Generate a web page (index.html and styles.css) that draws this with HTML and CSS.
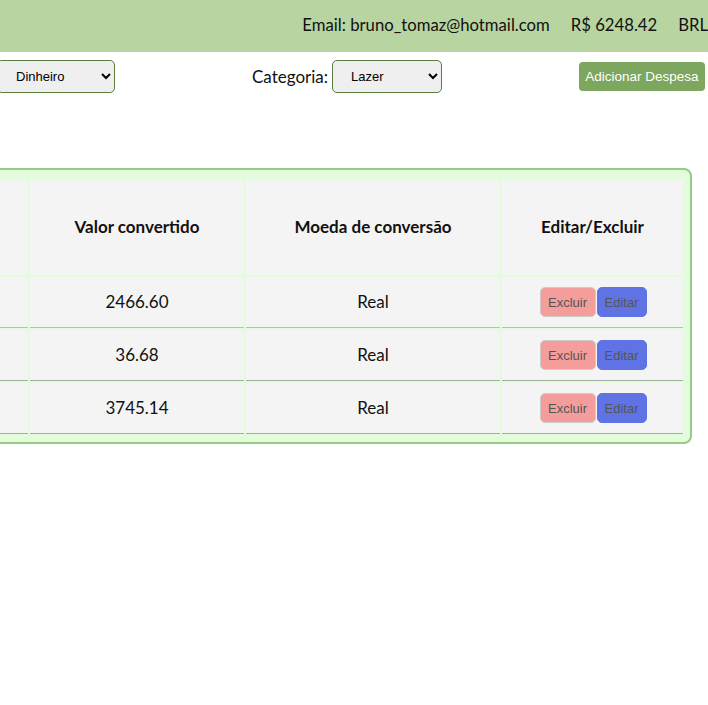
FILE: index.html
```html
<!DOCTYPE html>
<html lang="pt-BR">
<head>
<meta charset="utf-8">
<title>Despesas</title>
<link rel="stylesheet" href="styles.css">
</head>
<body>
<header class="topbar">
  <span class="topbar-item">Email: bruno_tomaz@hotmail.com</span>
  <span class="topbar-item">R$ 6248.42</span>
  <span class="topbar-item">BRL</span>
</header>

<form class="controls">
  <select class="field-select select-method">
    <option>Dinheiro</option>
  </select>
  <label class="field-group">
    <span class="field-label">Categoria:</span>
    <select class="field-select select-cat">
      <option>Lazer</option>
    </select>
  </label>
  <button type="button" class="add-btn">Adicionar Despesa</button>
</form>

<div class="table-box">
  <table class="expense-table">
    <colgroup>
      <col class="col-a">
      <col class="col-b">
      <col class="col-c">
      <col class="col-d">
    </colgroup>
    <thead>
      <tr>
        <th></th>
        <th>Valor convertido</th>
        <th>Moeda de conversão</th>
        <th>Editar/Excluir</th>
      </tr>
    </thead>
    <tbody>
      <tr class="row-first">
        <td></td>
        <td>2466.60</td>
        <td>Real</td>
        <td><button type="button" class="btn-del">Excluir</button><button type="button" class="btn-edit">Editar</button></td>
      </tr>
      <tr>
        <td></td>
        <td>36.68</td>
        <td>Real</td>
        <td><button type="button" class="btn-del">Excluir</button><button type="button" class="btn-edit">Editar</button></td>
      </tr>
      <tr>
        <td></td>
        <td>3745.14</td>
        <td>Real</td>
        <td><button type="button" class="btn-del">Excluir</button><button type="button" class="btn-edit">Editar</button></td>
      </tr>
    </tbody>
  </table>
</div>
</body>
</html>
```

FILE: styles.css
```css
html, body {
  margin: 0;
  padding: 0;
  background: #ffffff;
  overflow: hidden;
}

body {
  font-family: Lato, "Noto Sans", sans-serif;
  font-size: 17px;
  color: #111111;
  width: 708px;
}

.topbar {
  height: 52px;
  background: #b8d4a0;
  display: flex;
  justify-content: flex-end;
  align-items: center;
  gap: 21px;
  white-space: nowrap;
  font-size: 16.7px;
  padding-bottom: 2px;
  box-sizing: border-box;
}

.controls {
  display: flex;
  justify-content: space-between;
  align-items: center;
  margin: 8px 0 0 -3px;
  padding-right: 3px;
  height: 33px;
}

.field-group {
  display: flex;
  align-items: center;
  gap: 4px;
}

.field-select {
  height: 33px;
  border: 1px solid #5a7d3b;
  border-radius: 5px;
  background: #efefef;
  font-family: "Liberation Sans", Arial, sans-serif;
  font-size: 13px;
  color: #000;
  text-align: left;
  padding: 0 4px 0 14px;
}

.select-method { width: 118px; }
.select-cat { width: 110px; }

.add-btn {
  height: 29px;
  width: 126px;
  border: none;
  border-radius: 4px;
  background: #7da65e;
  color: #ffffff;
  font-family: "Liberation Sans", Arial, sans-serif;
  font-size: 13.5px;
  padding: 0;
}

.table-box {
  margin: 75px 16px 0 -181px;
  border: 2px solid #96ca86;
  border-radius: 8px;
  background: #e2fcdc;
  padding: 7px 5px 6px;
}

.expense-table {
  width: 100%;
  table-layout: fixed;
  border-collapse: separate;
  border-spacing: 2px;
}

.col-a { width: 200px; }
.col-b { width: 214px; }
.col-c { width: 254px; }
.col-d { width: 181px; }

.expense-table th {
  background: #f4f4f4;
  height: 96px;
  padding: 0 8px 2px;
  font-weight: 700;
  text-align: center;
  box-sizing: border-box;
}

.expense-table td {
  background: #f4f4f4;
  text-align: center;
  padding: 0 8px 2px;
  height: 51px;
  box-sizing: border-box;
  border-bottom: 1px solid #aaaaaa;
}

.expense-table .row-first td {
  border-bottom-color: #a3cf98;
}

.expense-table td:last-child {
  padding-bottom: 0;
}

.btn-del, .btn-edit {
  height: 30px;
  border: 1px solid #cccccc;
  border-radius: 5px;
  font-family: "Liberation Sans", Arial, sans-serif;
  font-size: 13px;
  color: #555555;
  padding: 0 6px;
  vertical-align: middle;
}

.btn-del {
  background: #f49d9a;
  width: 56px;
  margin-left: 1px;
}

.btn-edit {
  background: #5f73e5;
  border-color: #5f73e5;
  width: 50px;
  margin-left: 1px;
}
```
